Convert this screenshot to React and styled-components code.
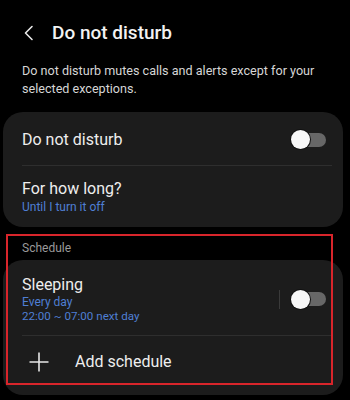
import React from 'react';
import styled, { createGlobalStyle } from 'styled-components';

const GlobalStyle = createGlobalStyle`
    body {
        margin: 0;
        background: #000;
        font-family: Roboto, "Liberation Sans", sans-serif;
        color: #f0f0f0;
    }
`;

const Page = styled.div`
    width: 350px;
    height: 400px;
    overflow: hidden;
    background: #000;
`;

const Header = styled.div`
    display: flex;
    align-items: center;
    height: 24px;
    padding-top: 21px;
    padding-left: 22px;
`;

const BackButton = styled.div`
    width: 14px;
    height: 24px;
    margin-right: 16px;
    display: flex;
    align-items: center;
`;

const Title = styled.h1`
    margin: 0;
    font-size: 19px;
    line-height: 24px;
    font-weight: 500;
    color: #f2f2f2;
`;

const Description = styled.p`
    margin: 17px 0 0;
    padding: 0 22px;
    font-size: 12.6px;
    line-height: 18px;
    color: #d6d6d6;
`;

const Card = styled.div`
    margin: ${p => p.$top || 0}px 7px 0 3px;
    background: #1c1c1c;
    border-radius: 20px;
    padding-bottom: ${p => p.$bottom || 0}px;
`;

const Row = styled.div`
    display: flex;
    align-items: center;
    min-height: ${p => p.$height}px;
    padding: ${p => p.$pad || '0'} 17px 0 19px;
    box-sizing: border-box;
`;

const Texts = styled.div`
    flex: 1;
    display: flex;
    flex-direction: column;
`;

const Label = styled.div`
    font-size: 16px;
    line-height: 20px;
    color: #eeeeee;
`;

const Sub = styled.div`
    font-size: ${p => p.$size || 12}px;
    line-height: ${p => p.$lh || 16}px;
    color: #4f7fd4;
`;

const Divider = styled.div`
    height: 1px;
    margin: 0 11px 0 19px;
    background: #2e2e2e;
`;

const VDivider = styled.div`
    width: 1px;
    height: 19px;
    margin-right: 11px;
    background: #3a3a3a;
`;

const Toggle = styled.div`
    position: relative;
    width: 35px;
    height: 19px;
    flex-shrink: 0;

    &::before {
        content: '';
        position: absolute;
        right: 0;
        top: 2.5px;
        width: 30px;
        height: 14px;
        border-radius: 7px;
        background: #676767;
    }

    &::after {
        content: '';
        position: absolute;
        left: 0;
        top: 0;
        width: 19px;
        height: 19px;
        border-radius: 50%;
        background: #f7f7f7;
        box-shadow: 0 0 0 1px #111;
    }
`;

const Section = styled.div`
    position: relative;
`;

const SectionLabel = styled.div`
    margin-top: 13px;
    padding-left: 22px;
    font-size: 12px;
    line-height: 16px;
    color: #9a9a9a;
`;

const Highlight = styled.div`
    position: absolute;
    left: 6px;
    top: -6px;
    width: 327px;
    height: 151px;
    box-sizing: border-box;
    border: 2px solid #d9252b;
    pointer-events: none;
`;

const AddIcon = styled.div`
    width: 20px;
    height: 20px;
    margin-left: 7px;
    margin-right: 26px;
    display: flex;
`;

const Chevron = () => (
    <svg width="14" height="24" viewBox="0 0 14 24">
        <path d="M10 5.5 L3.5 12 L10 18.5" fill="none" stroke="#e8e8e8" strokeWidth="1.6" strokeLinecap="round" strokeLinejoin="round" />
    </svg>
);

const Plus = () => (
    <svg width="20" height="20" viewBox="0 0 20 20">
        <path d="M10 0.5 V19.5 M0.5 10 H19.5" stroke="#e6e6e6" strokeWidth="1.6" />
    </svg>
);

const App = () => {
    return (
        <Page>
            <GlobalStyle />
            <Header>
                <BackButton><Chevron /></BackButton>
                <Title>Do not disturb</Title>
            </Header>

            <Description>
                Do not disturb mutes calls and alerts except for your selected exceptions.
            </Description>

            <Card $top={14}>
                <Row $height={53} $pad="2px">
                    <Texts><Label>Do not disturb</Label></Texts>
                    <Toggle />
                </Row>
                <Divider />
                <Row $height={61}>
                    <Texts>
                        <Label>For how long?</Label>
                        <Sub>Until I turn it off</Sub>
                    </Texts>
                </Row>
            </Card>

            <Section>
                <Highlight />
                <SectionLabel>Schedule</SectionLabel>
                <Card $top={4} $bottom={7}>
                    <Row $height={75} $pad="3px">
                        <Texts>
                            <Label>Sleeping</Label>
                            <Sub $lh={14}>Every day</Sub>
                            <Sub $lh={14} $size={11.6}>22:00 ~ 07:00 next day</Sub>
                        </Texts>
                        <VDivider />
                        <Toggle />
                    </Row>
                    <Divider />
                    <Row $height={52}>
                        <AddIcon><Plus /></AddIcon>
                        <Label>Add schedule</Label>
                    </Row>
                </Card>
            </Section>
        </Page>
    );
};

export default App;
